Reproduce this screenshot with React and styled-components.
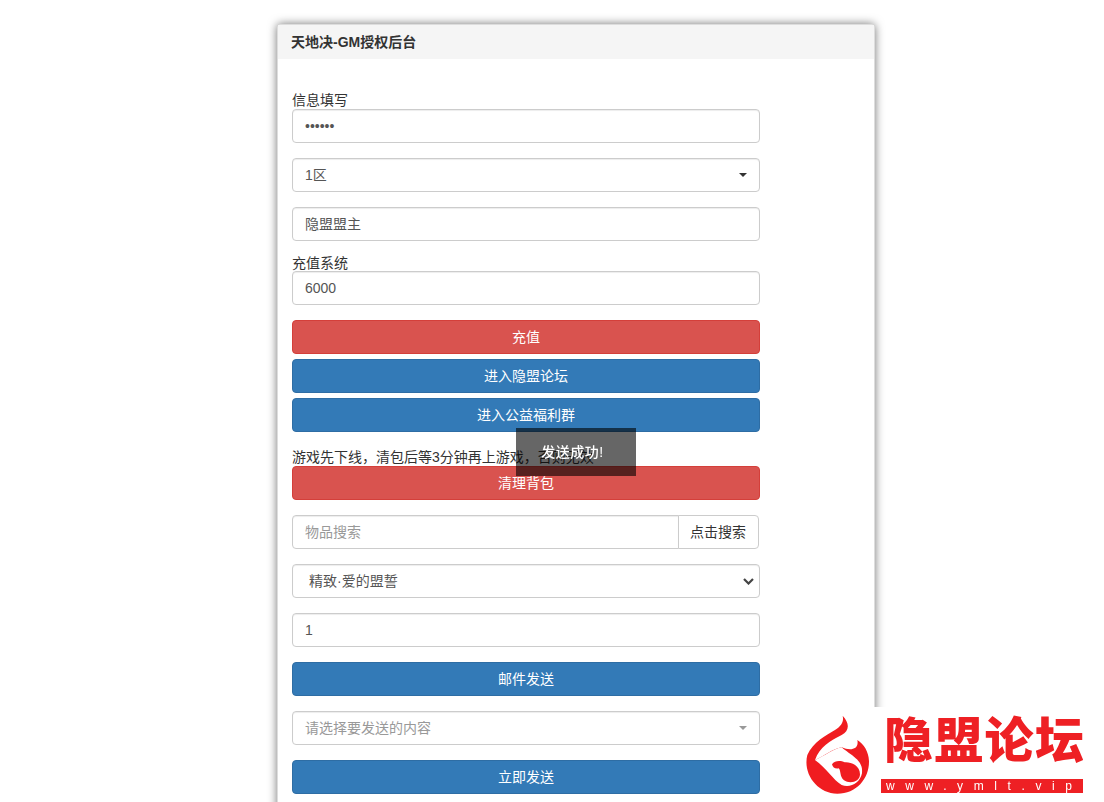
import React from 'react'
import styled, { createGlobalStyle } from 'styled-components'

const Global = createGlobalStyle`
    html, body {
        margin: 0;
        height: 802px;
        overflow: hidden;
        background: #fff;
    }
    body {
        font-family: Arial, "Liberation Sans", "Noto Sans CJK SC", sans-serif;
        font-size: 14px;
        line-height: 20px;
        color: #333;
    }
    * { box-sizing: border-box; }
`

const Panel = styled.div`
    width: 598px;
    margin: 24px auto 0 277px;
    background: #fff;
    border-radius: 4px;
    border: 1px solid #ddd;
    box-shadow: 0 0 10px rgba(0, 0, 0, 0.55);
`

const PanelHeading = styled.div`
    height: 34px;
    padding: 7px 13px;
    background: #f5f5f5;
    font-weight: bold;
    color: #333;
`

const PanelBody = styled.div`
    width: 482px;
    padding: 31px 0 40px 14px;
    display: flex;
    flex-direction: column;
`

const Label = styled.div`
    height: 20px;
    margin-bottom: ${p => p.$mb ?? -1}px;
`

const Note = styled.div`
    height: 20px;
    margin-top: 15px;
    margin-bottom: -1px;
`

const Field = styled.div`
    height: 34px;
    flex: none;
    display: flex;
    align-items: center;
    justify-content: space-between;
    padding: 0 12px;
    margin-bottom: ${p => p.$mb ?? 15}px;
    border: 1px solid #ccc;
    border-radius: 4px;
    background: #fff;
    color: ${p => p.$muted ? '#999' : '#555'};
    box-shadow: inset 0 1px 1px rgba(0, 0, 0, 0.075);
`

const Dots = styled.span`
    font-size: 14px;
    color: #555;
`

const Caret = styled.span`
    width: 0;
    height: 0;
    border-left: 4px solid transparent;
    border-right: 4px solid transparent;
    border-top: 4px solid ${p => p.$muted ? '#999' : '#333'};
`

const Chevron = styled.svg`
    width: 11px;
    height: 7px;
    margin-right: -7px;
    fill: none;
    stroke: #444;
    stroke-width: 2.2;
`

const Button = styled.div`
    height: 34px;
    flex: none;
    display: flex;
    align-items: center;
    justify-content: center;
    margin-bottom: ${p => p.$mb ?? 5}px;
    border-radius: 4px;
    color: #fff;
    background: ${p => p.$danger ? '#d9534f' : '#337ab7'};
    border: 1px solid ${p => p.$danger ? '#d43f3a' : '#2e6da4'};
`

const InputGroup = styled.div`
    display: flex;
    width: 467px;
    height: 34px;
    margin-bottom: 15px;
`

const GroupInput = styled.div`
    flex: 1;
    padding: 6px 12px;
    border: 1px solid #ccc;
    border-radius: 4px 0 0 4px;
    color: #999;
    box-shadow: inset 0 1px 1px rgba(0, 0, 0, 0.075);
`

const GroupButton = styled.div`
    width: 81px;
    margin-left: -1px;
    padding: 6px 11px;
    border: 1px solid #ccc;
    border-radius: 0 4px 4px 0;
    color: #333;
    background: #fff;
    white-space: nowrap;
`

const SelectText = styled.span`
    padding-left: 4px;
`

const Toast = styled.div`
    position: fixed;
    left: 516px;
    top: 428px;
    width: 120px;
    height: 48px;
    padding-right: 7px;
    display: flex;
    align-items: center;
    justify-content: center;
    background: rgba(0, 0, 0, 0.6);
    color: #fff;
    font-weight: 500;
    letter-spacing: 0.5px;
`

const Logo = styled.div`
    position: fixed;
    right: 0;
    bottom: 0;
    width: 298px;
    height: 95px;
    display: flex;
    align-items: flex-start;
    background: #fff;
`

const LogoMark = styled.svg`
    width: 64px;
    height: 80px;
    margin-top: 8px;
    flex: none;
`

const LogoText = styled.div`
    margin-left: 11px;
    width: 202px;
    display: flex;
    flex-direction: column;
`

const LogoTitle = styled.div`
    height: 60px;
    margin-left: 3px;
    font-family: "Noto Sans CJK SC", sans-serif;
    font-weight: 900;
    font-size: 49px;
    line-height: 60px;
    letter-spacing: 1.3px;
    color: #ee2024;
    white-space: nowrap;
`

const LogoUrl = styled.div`
    height: 14px;
    margin-top: 12px;
    padding-left: 5px;
    background: #ee2024;
    color: #fff;
    font-size: 12px;
    line-height: 14px;
    letter-spacing: 10.6px;
    white-space: nowrap;
`

export default function App() {
    return (
        <>
            <Global />
            <Panel>
                <PanelHeading>天地决-GM授权后台</PanelHeading>
                <PanelBody>
                    <Label>信息填写</Label>
                    <Field><Dots>••••••</Dots></Field>
                    <Field>1区<Caret /></Field>
                    <Field $mb={12}>隐盟盟主</Field>
                    <Label $mb={-2}>充值系统</Label>
                    <Field>6000</Field>
                    <Button $danger>充值</Button>
                    <Button>进入隐盟论坛</Button>
                    <Button $mb={0}>进入公益福利群</Button>
                    <Note>游戏先下线，清包后等3分钟再上游戏，否则无效</Note>
                    <Button $danger $mb={15}>清理背包</Button>
                    <InputGroup>
                        <GroupInput>物品搜索</GroupInput>
                        <GroupButton>点击搜索</GroupButton>
                    </InputGroup>
                    <Field>
                        <SelectText>精致·爱的盟誓</SelectText>
                        <Chevron viewBox="0 0 11 7"><path d="M1 1 L5.5 5.5 L10 1" /></Chevron>
                    </Field>
                    <Field>1</Field>
                    <Button $mb={15}>邮件发送</Button>
                    <Field $muted>请选择要发送的内容<Caret $muted /></Field>
                    <Button>立即发送</Button>
                </PanelBody>
            </Panel>
            <Toast>发送成功!</Toast>
            <Logo>
                <LogoMark viewBox="18 30 192 240">
                    <path fill="#f01c20" d="M128 32 C150 55 148 78 125 90 C90 108 60 125 45 165 C70 155 100 130 125 127 C150 138 178 135 172 105 C192 118 206 140 207 168 C208 220 170 266 112 266 C50 265 8 205 22 150 C38 112 80 90 105 75 C125 62 132 50 128 32 Z" />
                    <path fill="#fff" d="M45 165 C75 152 100 132 125 127 C150 150 192 165 186 205 C180 235 150 250 125 240 C100 225 80 190 45 165 Z" />
                    <path fill="#f01c20" d="M96 178 C104 166 122 166 134 172 C150 170 180 180 180 208 C180 232 148 238 132 226 C118 214 124 198 116 190 C106 192 98 188 96 178 Z" />
                </LogoMark>
                <LogoText>
                    <LogoTitle>隐盟论坛</LogoTitle>
                    <LogoUrl>www.ymlt.vip</LogoUrl>
                </LogoText>
            </Logo>
        </>
    )
}
